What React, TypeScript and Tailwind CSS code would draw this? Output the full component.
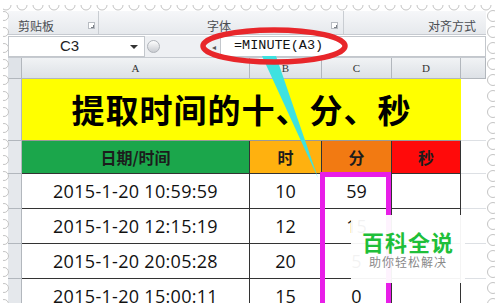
import React from "react";

const cjk = "font-['Noto_Sans_CJK_SC',sans-serif]";

const rows = [
  { date: "2015-1-20 10:59:59", h: "10", m: "59" },
  { date: "2015-1-20 12:15:19", h: "12", m: "15" },
  { date: "2015-1-20 20:05:28", h: "20", m: "5" },
  { date: "2015-1-20 15:00:11", h: "15", m: "0" },
];

function Launcher() {
  return (
    <div className="w-[7px] h-[7px] border border-[#b8bcc2] bg-white relative">
      <div className="absolute right-0 bottom-0 w-[3px] h-[3px] border-r border-b border-[#7a7f86]" />
    </div>
  );
}

// stamp-like perforated edge
function Perforation() {
  const top = Array.from({ length: 32 }, (_, i) => 6 + i * 16);
  const side = Array.from({ length: 20 }, (_, i) => 16 + i * 16);
  return (
    <svg className="absolute inset-0 pointer-events-none" width="500" height="303">
      {top.map((x) => (
        <circle key={"t" + x} cx={x} cy={5} r={5} fill="#fff" stroke="#c4c4c4" strokeWidth="1" />
      ))}
      {side.map((y) => (
        <circle key={"l" + y} cx={4} cy={y} r={4.5} fill="#fff" stroke="#c4c4c4" strokeWidth="1" />
      ))}
      {side.map((y) => (
        <circle key={"r" + y} cx={493} cy={y} r={5.5} fill="#fff" stroke="#c4c4c4" strokeWidth="1" />
      ))}
      <rect x="0" y="0" width="500" height="5" fill="#fff" />
      <rect x="0" y="0" width="3" height="303" fill="#fff" />
      <rect x="495" y="0" width="5" height="303" fill="#fff" />
    </svg>
  );
}

export default function App() {
  return (
    <div className={`relative w-[500px] h-[303px] overflow-hidden bg-white ${cjk}`}>
      <div className="flex flex-col pt-[11px] pl-[8px] pr-[14px] h-full">
        {/* ribbon group labels */}
        <div className="h-[24px] flex items-center bg-gradient-to-b from-[#f6f7f9] to-[#e6e9ed] border-b border-[#c6cad0] text-[12px] text-[#4a4d52]">
          <div className="w-[90px] flex items-center justify-between pl-[10px] pr-[3px] pt-[6px]">
            <span>剪贴板</span>
            <Launcher />
          </div>
          <div className="w-px h-full bg-[#c9cdd2]" />
          <div className="w-[244px] flex items-center pr-[5px] pt-[6px]">
            <span className="flex-1 text-center pl-[8px]">字体</span>
            <Launcher />
          </div>
          <div className="w-px h-full bg-[#c9cdd2]" />
          <div className="flex-1 text-right pr-[10px] pt-[6px]">对齐方式</div>
        </div>

        {/* formula bar */}
        <div className="h-[22px] flex items-stretch bg-[#eef0f3] border-b border-[#c6cad0] mt-[1px]">
          <div className="w-[137px] bg-white border border-[#c3c7cc] flex items-center">
            <span className="flex-1 text-center font-['Liberation_Sans',sans-serif] text-[15px] text-[#222]">C3</span>
            <span className="w-0 h-0 border-l-[4px] border-r-[4px] border-t-[4px] border-l-transparent border-r-transparent border-t-[#333] mr-[6px]" />
          </div>
          <div className="w-[75px] flex items-center pl-[2px]">
            <div className="w-[13px] h-[13px] rounded-full bg-gradient-to-b from-[#fefefe] to-[#c9ccd1] border border-[#aeb2b8]" />
            <span className="ml-auto mr-[4px] text-[8px] text-[#555]">◂</span>
          </div>
          <div className="flex-1 bg-white border border-[#c3c7cc] flex items-center pl-[13px] font-['Liberation_Mono',monospace] text-[13.5px] text-[#111]">
            =MINUTE(A3)
          </div>
        </div>

        {/* sheet grid */}
        <div className="grid grid-cols-[14px_228px_72px_70px_69px_1fr] grid-rows-[21px_62px_33px_35px_35px_35px_35px]">
          {/* column headers */}
          <div className="bg-[#dfe3e8] border-r border-b border-[#b2b7bd]" />
          {["A", "B", "C", "D", ""].map((c, i) => (
            <div
              key={i}
              className="bg-gradient-to-b from-[#f1f3f5] to-[#dde1e6] border-r border-b border-[#b2b7bd] flex items-center justify-center font-['Liberation_Serif',serif] text-[11px] text-[#333]"
            >
              {c}
            </div>
          ))}

          {/* title row */}
          <div className="bg-[#e5e8ec] border-r border-b border-[#b2b7bd]" />
          <div className="col-span-4 bg-[#ffff00] border-b border-[#999] flex items-center justify-center font-bold text-[33px] text-black tracking-[1px]">
            提取时间的十、分、秒
          </div>
          <div className="border-b border-[#dde0e4]" />

          {/* header row */}
          <div className="bg-[#e5e8ec] border-r border-b border-[#b2b7bd]" />
          <div className="bg-[#1ba64b] border-r border-b border-[#333] flex items-center justify-center font-bold text-[16px] text-[#1c1c1c]">
            日期/时间
          </div>
          <div className="bg-[#ffb10f] border-r border-b border-[#333] flex items-center justify-center font-bold text-[16px] text-[#1c1c1c]">
            时
          </div>
          <div className="bg-[#f27a12] border-r border-b border-[#333] flex items-center justify-center font-bold text-[16px] text-[#1c1c1c]">
            分
          </div>
          <div className="bg-[#ff0a0a] border-r border-b border-[#333] flex items-center justify-center font-bold text-[16px] text-[#1c1c1c]">
            秒
          </div>
          <div className="border-b border-[#dde0e4]" />

          {rows.map((r) => (
            <React.Fragment key={r.date}>
              <div className="bg-[#e5e8ec] border-r border-b border-[#b2b7bd]" />
              <div className="border-r border-b border-[#333] flex items-center justify-center font-['Open_Sans',sans-serif] text-[18px] tracking-[0.3px] text-[#111]">
                {r.date}
              </div>
              <div className="border-r border-b border-[#333] flex items-center justify-center font-['Open_Sans',sans-serif] text-[18px] text-[#111]">
                {r.h}
              </div>
              <div className="border-r border-b border-[#333] flex items-center justify-center font-['Open_Sans',sans-serif] text-[18px] text-[#111]">
                {r.m}
              </div>
              <div className="border-r border-b border-[#333]" />
              <div className="border-b border-[#dde0e4]" />
            </React.Fragment>
          ))}
        </div>
      </div>

      {/* magenta highlight around column C */}
      <div className="absolute left-[320px] top-[172px] w-[71px] h-[150px] border-[5px] border-[#e81ee8]" />

      {/* watermark */}
      <div className="absolute left-[351px] top-[215px] w-[114px] h-[68px] bg-white/95 flex flex-col items-center justify-center">
        <div className="text-[22px] font-bold text-[#1fbf3a] leading-[26px] tracking-[1px]">百科全说</div>
        <div className="text-[12px] text-[#8a8a8a] leading-[16px] tracking-[1px]">助你轻松解决</div>
      </div>

      {/* annotations */}
      <svg className="absolute inset-0 pointer-events-none" width="500" height="303">
        <polygon points="262,56 276,56 318,178" fill="#3ee2e0" />
        <ellipse cx="274" cy="46" rx="71" ry="16" fill="none" stroke="#e8262a" strokeWidth="5.5" />
      </svg>

      <Perforation />
    </div>
  );
}
